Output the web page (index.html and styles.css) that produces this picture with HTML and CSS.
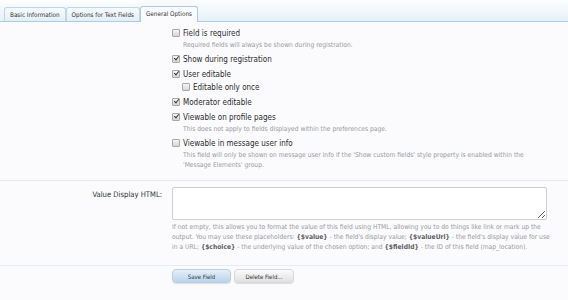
FILE: index.html
```html
<!DOCTYPE html>
<html lang="en">
<head>
    <meta charset="UTF-8">
    <title>Edit Field - General Options</title>
    <link rel="stylesheet" href="styles.css">
</head>
<body>
    <div class="tabs">
        <ul class="tab-list">
            <li class="tab">Basic Information</li>
            <li class="tab">Options for Text Fields</li>
            <li class="tab active">General Options</li>
        </ul>
    </div>

    <div class="section options">
        <ul class="check-list">
            <li class="check-item">
                <label class="check-label"><span class="box"></span>Field is required</label>
                <p class="hint">Required fields will always be shown during registration.</p>
            </li>
            <li class="check-item">
                <label class="check-label"><span class="box checked"></span>Show during registration</label>
            </li>
            <li class="check-item">
                <label class="check-label"><span class="box checked"></span>User editable</label>
                <ul class="check-list sub">
                    <li class="check-item">
                        <label class="check-label"><span class="box"></span>Editable only once</label>
                    </li>
                </ul>
            </li>
            <li class="check-item">
                <label class="check-label"><span class="box checked"></span>Moderator editable</label>
            </li>
            <li class="check-item">
                <label class="check-label"><span class="box checked"></span>Viewable on profile pages</label>
                <p class="hint">This does not apply to fields displayed within the preferences page.</p>
            </li>
            <li class="check-item">
                <label class="check-label"><span class="box"></span>Viewable in message user info</label>
                <p class="hint">This field will only be shown on message user info if the 'Show custom fields' style property is enabled within the 'Message Elements' group.</p>
            </li>
        </ul>
    </div>

    <div class="section field-row">
        <label class="row-label">Value Display HTML:</label>
        <div class="row-body">
            <textarea class="text-area"></textarea>
            <p class="hint">If not empty, this allows you to format the value of this field using HTML, allowing you to do things like link or mark up the output. You may use these placeholders: <b>{$value}</b> - the field's display value; <b>{$valueUrl}</b> - the field's display value for use in a URL; <b>{$choice}</b> - the underlying value of the chosen option; and <b>{$fieldId}</b> - the ID of this field (map_location).</p>
        </div>
    </div>

    <div class="section submit">
        <button class="btn primary">Save Field</button>
        <button class="btn">Delete Field...</button>
    </div>
</body>
</html>
```

FILE: styles.css
```css
body {
    margin: 0;
    background-color: #fbfbfe;
    font-family: "DejaVu Sans Condensed", "DejaVu Sans", sans-serif;
    color: #2a2a2a;
    overflow: hidden;
}

ul {
    list-style: none;
    margin: 0;
    padding: 0;
}

p {
    margin: 0;
}

/* tab strip */
.tabs {
    height: 21px;
    background: linear-gradient(to bottom, #fdfeff, #e6f0f9);
    border-bottom: 1px solid #a9cde6;
}

.tab-list {
    display: flex;
    align-items: flex-end;
    height: 21px;
    padding-left: 4px;
}

.tab {
    height: 13px;
    line-height: 13px;
    padding: 0 5px;
    font-size: 6.3px;
    color: #333;
    background: linear-gradient(to bottom, #f8fbfd, #e4eef7);
    border: 1px solid #bcd6ea;
    border-bottom: none;
    border-radius: 3px 3px 0 0;
}

.tab.active {
    height: 15px;
    line-height: 14px;
    margin-bottom: -1px;
    background: #fbfbfe;
    border-color: #a9cde6;
}

/* form sections */
.section {
    padding-left: 172px;
}

.options {
    padding-top: 5px;
    padding-bottom: 7px;
    border-bottom: 1px solid #e0eef7;
}

.check-item {
    margin-bottom: 3px;
}

.check-list.sub {
    padding-left: 10px;
    margin-top: 1px;
}

.check-list.sub .check-item {
    margin-bottom: 0;
}

.check-label {
    display: flex;
    align-items: center;
    gap: 3px;
    height: 12px;
    font-size: 8px;
    color: #2a2a2a;
}

.box {
    width: 6px;
    height: 6px;
    border: 1px solid #a8a8a8;
    border-radius: 1px;
    background: linear-gradient(to bottom, #f6f6f6, #d6d6d6);
    position: relative;
}

.box.checked::after {
    content: "";
    position: absolute;
    left: 2px;
    top: -1px;
    width: 2px;
    height: 4px;
    border: solid #3a3a3a;
    border-width: 0 1px 1px 0;
    transform: rotate(40deg);
}

.hint {
    font-size: 6.7px;
    line-height: 10px;
    color: #9a9a9a;
    padding-left: 11px;
    padding-right: 20px;
}

.check-item .hint {
    margin-top: 1px;
}

.field-row {
    display: flex;
    padding-left: 0;
    padding-top: 6px;
    padding-bottom: 13px;
    border-bottom: 1px solid #e0eef7;
}

.row-label {
    width: 172px;
    padding-right: 10px;
    box-sizing: border-box;
    text-align: right;
    font-size: 7.6px;
    color: #333;
    padding-top: 3px;
}

.row-body {
    width: 378px;
}

.text-area {
    display: block;
    width: 375px;
    height: 33px;
    box-sizing: border-box;
    border: 1px solid #cfcfcf;
    border-radius: 2px;
    background: #fff;
    margin-bottom: 2px;
}

.row-body .hint {
    padding-left: 0;
    padding-right: 0;
}

.row-body .hint b {
    color: #5f5f5f;
}

.submit {
    padding-top: 3px;
    height: 40px;
    display: flex;
    gap: 3px;
    align-items: flex-start;
}

.btn {
    width: 60px;
    height: 14px;
    padding: 0;
    font-family: inherit;
    font-size: 6px;
    color: #333;
    border: 1px solid #d8d8d8;
    border-radius: 4px;
    background: linear-gradient(to bottom, #fbfbfb, #e0e0e0);
    box-shadow: 0 1px 1px rgba(0, 0, 0, 0.12);
}

.btn.primary {
    width: 59px;
    border-color: #b9d0e4;
    background: linear-gradient(to bottom, #e6eff8, #b9d4eb);
}
```
